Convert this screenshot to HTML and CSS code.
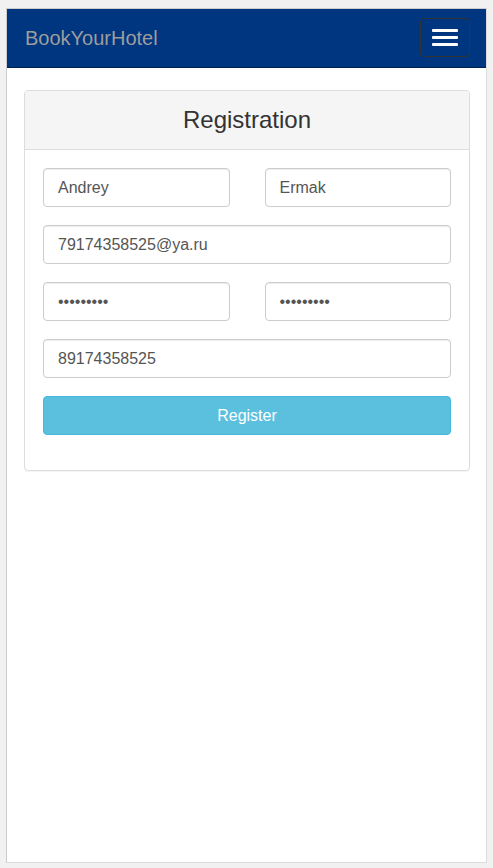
FILE: index.html
```html
<!DOCTYPE html>
<html>
<head>
<meta charset="utf-8">
<link rel="stylesheet" href="styles.css">
</head>
<body>
<div class="frame">
  <nav class="navbar">
    <span class="brand">BookYourHotel</span>
    <button class="toggler" type="button">
      <span class="bar"></span><span class="bar"></span><span class="bar"></span>
    </button>
  </nav>
  <main class="content">
    <section class="panel">
      <div class="panel-heading">Registration</div>
      <form class="panel-body">
        <div class="row">
          <input class="field" type="text" value="Andrey">
          <input class="field" type="text" value="Ermak">
        </div>
        <input class="field" type="text" value="79174358525@ya.ru">
        <div class="row">
          <input class="field" type="password" value="123456789">
          <input class="field" type="password" value="123456789">
        </div>
        <input class="field" type="text" value="89174358525">
        <button class="btn" type="button">Register</button>
      </form>
    </section>
  </main>
</div>
</body>
</html>
```
FILE: styles.css
```css
* { box-sizing: border-box; }
html, body { margin: 0; padding: 0; }
body {
  background: #f1f1f1;
  padding: 8px 6px 5px 6px;
  font-family: "Liberation Sans", Arial, sans-serif;
}
.frame {
  width: 481px;
  height: 855px;
  background: #fff;
  border: 1px solid #cdcdcd;
  border-right-color: #dcdcdc;
  border-bottom-color: #dcdcdc;
}
.navbar {
  height: 59px;
  background: #003580;
  border-bottom: 1px solid #00204d;
  display: flex;
  align-items: center;
  justify-content: space-between;
  padding: 0 16px 0 18px;
}
.brand {
  color: #9d9d9d;
  font-size: 20px;
  line-height: 20px;
}
.toggler {
  width: 50px;
  height: 39px;
  background: transparent;
  border: 1px solid #333;
  border-radius: 4px;
  display: flex;
  flex-direction: column;
  align-items: center;
  justify-content: center;
  gap: 4px;
  padding: 0;
  margin-top: -1px;
}
.bar {
  display: block;
  width: 26px;
  height: 3px;
  background: #fff;
  border-radius: 1px;
}
.content {
  padding: 22px 16px 0 17px;
}
.panel {
  border: 1px solid #dddddd;
  border-radius: 4px;
  box-shadow: 0 1px 1px rgba(0,0,0,0.05);
}
.panel-heading {
  height: 59px;
  background: #f5f5f5;
  border-bottom: 1px solid #dddddd;
  border-radius: 3px 3px 0 0;
  color: #333;
  font-size: 24px;
  display: flex;
  align-items: center;
  justify-content: center;
  padding-bottom: 1px;
}
.panel-body {
  padding: 18px 18px 35px 18px;
  display: flex;
  flex-direction: column;
  gap: 18px;
  margin: 0;
}
.row {
  display: flex;
  gap: 35px;
}
.row .field { flex: 1 1 0; min-width: 0; }
.field {
  height: 39px;
  width: 100%;
  border: 1px solid #cccccc;
  border-radius: 4px;
  padding: 0 14px;
  font-family: "Liberation Sans", Arial, sans-serif;
  font-size: 16px;
  color: #555;
  background: #fff;
  box-shadow: inset 0 1px 1px rgba(0,0,0,0.075);
  outline: none;
}
.btn {
  height: 39px;
  width: 100%;
  background: #5bc0de;
  border: 1px solid #46b8da;
  border-radius: 4px;
  color: #fff;
  font-family: "Liberation Sans", Arial, sans-serif;
  font-size: 16px;
  padding: 0;
}
```
